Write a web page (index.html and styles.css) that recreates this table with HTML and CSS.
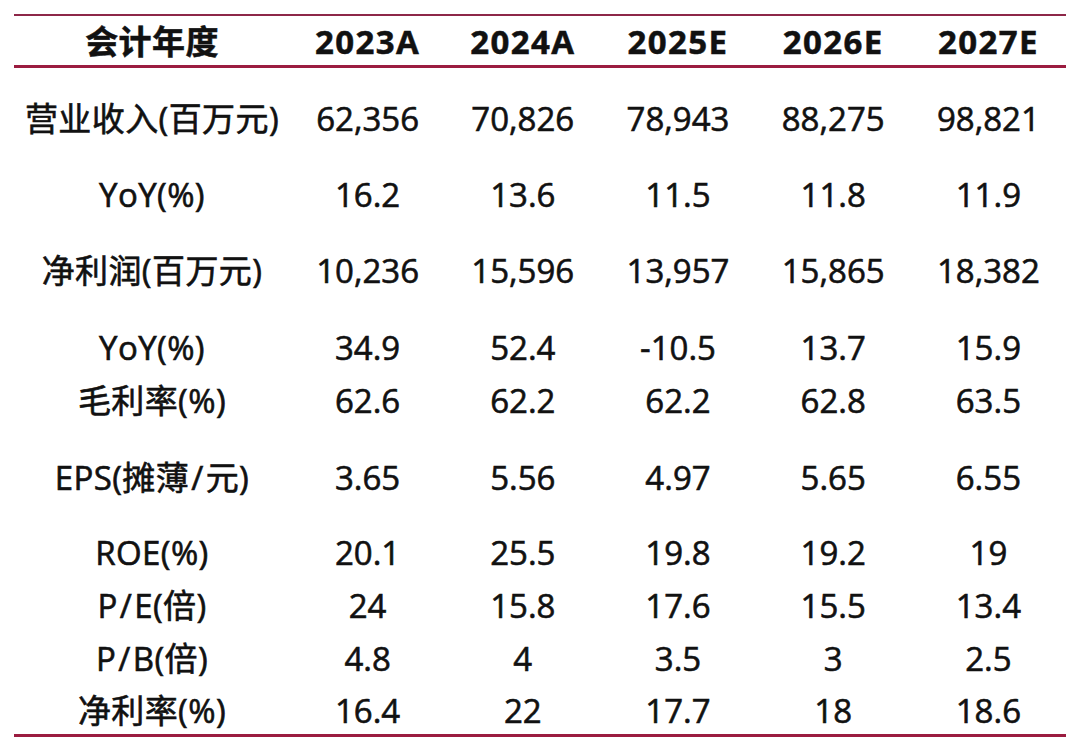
FILE: index.html
```html
<!DOCTYPE html>
<html lang="zh-CN">
<head>
<meta charset="utf-8">
<link rel="stylesheet" href="styles.css">
</head>
<body>
<div class="table">
  <div class="rule rule-top"></div>
  <div class="row head">
    <div class="cell label">会计年度</div>
    <div class="cell">2023A</div>
    <div class="cell">2024A</div>
    <div class="cell">2025E</div>
    <div class="cell">2026E</div>
    <div class="cell">2027E</div>
  </div>
  <div class="rule rule-mid"></div>
  <div class="row first">
    <div class="cell label">营业收入(百万元)</div>
    <div class="cell">62,356</div><div class="cell">70,826</div><div class="cell">78,943</div><div class="cell">88,275</div><div class="cell">98,821</div>
  </div>
  <div class="row tall">
    <div class="cell label">YoY(%)</div>
    <div class="cell">16.2</div><div class="cell">13.6</div><div class="cell">11.5</div><div class="cell">11.8</div><div class="cell">11.9</div>
  </div>
  <div class="row tall">
    <div class="cell label">净利润(百万元)</div>
    <div class="cell">10,236</div><div class="cell">15,596</div><div class="cell">13,957</div><div class="cell">15,865</div><div class="cell">18,382</div>
  </div>
  <div class="row taller">
    <div class="cell label">YoY(%)</div>
    <div class="cell">34.9</div><div class="cell">52.4</div><div class="cell">-10.5</div><div class="cell">13.7</div><div class="cell">15.9</div>
  </div>
  <div class="row short">
    <div class="cell label">毛利率(%)</div>
    <div class="cell">62.6</div><div class="cell">62.2</div><div class="cell">62.2</div><div class="cell">62.8</div><div class="cell">63.5</div>
  </div>
  <div class="row taller">
    <div class="cell label">EPS(摊薄<span class="slash">/</span>元)</div>
    <div class="cell">3.65</div><div class="cell">5.56</div><div class="cell">4.97</div><div class="cell">5.65</div><div class="cell">6.55</div>
  </div>
  <div class="row first">
    <div class="cell label">ROE(%)</div>
    <div class="cell">20.1</div><div class="cell">25.5</div><div class="cell">19.8</div><div class="cell">19.2</div><div class="cell">19</div>
  </div>
  <div class="row short">
    <div class="cell label">P<span class="slash">/</span>E(倍)</div>
    <div class="cell">24</div><div class="cell">15.8</div><div class="cell">17.6</div><div class="cell">15.5</div><div class="cell">13.4</div>
  </div>
  <div class="row short">
    <div class="cell label">P<span class="slash">/</span>B(倍)</div>
    <div class="cell">4.8</div><div class="cell">4</div><div class="cell">3.5</div><div class="cell">3</div><div class="cell">2.5</div>
  </div>
  <div class="row last">
    <div class="cell label">净利率(%)</div>
    <div class="cell">16.4</div><div class="cell">22</div><div class="cell">17.7</div><div class="cell">18</div><div class="cell">18.6</div>
  </div>
  <div class="rule rule-bottom"></div>
</div>
</body>
</html>
```

FILE: styles.css
```css
html, body {
  margin: 0;
  padding: 0;
  background: #ffffff;
}

.table {
  margin: 14px 0 0 14px;
  width: 1052px;
  font-family: "Open Sans", "Noto Sans CJK SC", sans-serif;
  font-size: 33px;
  font-weight: 400;
  color: #111111;
  -webkit-text-stroke: 0.6px #111111;
}

.rule {
  background: #9b1c40;
}

.rule-top {
  height: 2px;
  background: #8d2748;
}

.rule-mid {
  height: 3px;
}

.rule-bottom {
  height: 3px;
}

.row {
  display: grid;
  grid-template-columns: 276px repeat(5, 1fr);
  align-items: end;
  line-height: 34px;
  padding-bottom: 7px;
  box-sizing: border-box;
}

.cell {
  text-align: center;
  white-space: nowrap;
}

.label {
  letter-spacing: 0.4px;
}

.slash {
  padding: 0 2px;
}

.head {
  height: 49px;
  align-items: center;
  padding-bottom: 0;
  padding-top: 3px;
  font-weight: 700;
  font-size: 33px;
  letter-spacing: 1.4px;
  -webkit-text-stroke: 0.5px #111111;
}

.first { height: 75px; }
.tall { height: 76px; }
.taller { height: 77px; }
.short { height: 53px; }
.last { height: 51px; padding-bottom: 6px; }
```
